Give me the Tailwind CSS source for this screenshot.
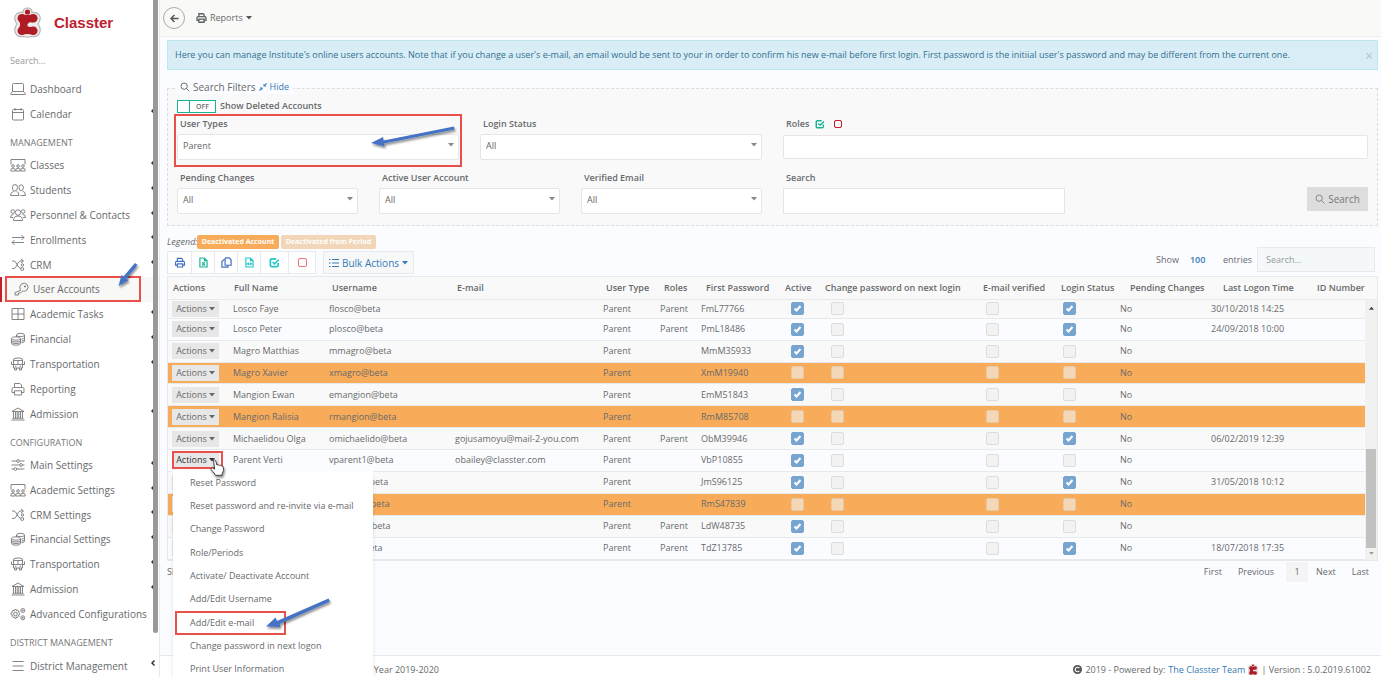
<!DOCTYPE html>
<html lang="en">

<head>
    <meta charset="UTF-8">
    <meta name="viewport" content="width=device-width, initial-scale=1.0">
    <title>Classter - User Accounts</title>
    <script src="https://cdn.jsdelivr.net/npm/@tailwindcss/browser@4"></script>
</head>

<body class="relative flex h-screen overflow-hidden bg-[#fbfcff] font-['Open_Sans',sans-serif] text-[9px] leading-[14px] text-[#676a6c]">

    <!-- Icon sprite -->
    <svg class="hidden" xmlns="http://www.w3.org/2000/svg">
        <symbol id="i-laptop" viewBox="0 0 16 14"><path d="M2.500 9.500v-7q0-1 1-1h9q1 0 1 1v7M2.500 9.500h11l2 2.500q0 .5-.8.5H1.300q-.8 0-.8-.5z"/></symbol>
        <symbol id="i-calendar" viewBox="0 0 16 14"><path d="M3.500 2.500h9q1 0 1 1v8.500q0 1-1 1h-9q-1 0-1-1V3.500q0-1 1-1zM2.500 5.500h11M5 1v2.500M11 1v2.500"/></symbol>
        <symbol id="i-class" viewBox="0 0 16 14"><path d="M1 6.500V1.500h14v5"/><circle cx="3" cy="8" r="1.300"/><circle cx="8" cy="8" r="1.300"/><circle cx="13" cy="8" r="1.300"/><path d="M.8 13v-1q0-1.800 2.200-1.800T5.200 12v1zM5.800 13v-1q0-1.800 2.200-1.800T10.200 12v1zM10.800 13v-1q0-1.800 2.200-1.800T15.200 12v1z"/></symbol>
        <symbol id="i-students" viewBox="0 0 16 14"><path d="M2.500 4.500q0-3 2.500-3t2.500 3T5 8 2.500 4.500zM9 4.500q0-2.700 2.200-2.700t2.300 2.700-2.300 3.100T9 4.500zM.5 12.500q0-3.500 3-4M6.500 8.500q2.500.5 2.500 4H.5M12.500 8q3 .8 3 4.500H10.500"/></symbol>
        <symbol id="i-people" viewBox="0 0 16 14"><circle cx="8" cy="4.500" r="2.700"/><circle cx="2.800" cy="3.500" r="1.800"/><circle cx="13.200" cy="3.500" r="1.800"/><path d="M3.500 12.500q0-4.500 4.500-4.500t4.500 4.500zM.5 9.500q0-3 3-3.200M15.500 9.500q0-3-3-3.200M.5 9.500h2.500M13 9.500h2.500"/></symbol>
        <symbol id="i-exchange" viewBox="0 0 16 14"><path d="M2 4.500h12M11.500 2l2.500 2.500L11.500 7M14 9.500H2M4.500 7L2 9.500 4.500 12"/></symbol>
        <symbol id="i-shuffle" viewBox="0 0 16 14"><path d="M2 3h2q1.500 0 3 3.500T11 10.500M2 10.500h2q1.500 0 3-3.500T10 3h3M11 1l2.500 2L11 5"/><circle cx="12.500" cy="7" r="1.200"/><circle cx="12.200" cy="11" r="1.500"/></symbol>
        <symbol id="i-key" viewBox="0 0 16 14"><path d="M7.500 8.500q-2-4 1-6.500 3-2 5.500.5t0 5.500q-2.500 2-4.500 1L7.500 11H5.500v2H2v-2.500zM11.500 4h1v1h-1z"/></symbol>
        <symbol id="i-grid" viewBox="0 0 16 14"><path d="M2 1.500h12v11H2zM8 1.500v11M2 7h12"/></symbol>
        <symbol id="i-coins" viewBox="0 0 16 14"><ellipse cx="10.500" cy="3" rx="4" ry="1.700"/><path d="M6.500 3v2M14.500 3v6q0 1.500-3 1.800M14.500 5.500q-.5 1.500-3 1.700M14.500 7.500q-.5 1.300-3 1.600"/><ellipse cx="6" cy="6.500" rx="4.500" ry="1.700"/><path d="M1.500 6.500v5q0 1.700 4.500 1.700t4.500-1.700v-5M1.500 8.500Q2 10 6 10t4.500-1.500M1.500 10Q2 11.600 6 11.600T10.500 10"/></symbol>
        <symbol id="i-bus" viewBox="0 0 16 14"><path d="M3.500 11V3q0-1.500 1.500-1.700 3-.6 6 0Q12.500 1.500 12.500 3v8zM3.500 3.500h9M3.500 7.500h9M8 3.500v4M1.500 4.500v3h2M14.500 4.500v3h-2M4.500 11v2h2v-2M9.500 11v2h2v-2M5 9.300h1.500M9.500 9.300H11"/></symbol>
        <symbol id="i-print" viewBox="0 0 16 14"><path d="M4.500 5.500v-4h5.500l1.500 1.500v2.500M4.500 10.500H2V7q0-1.500 1.500-1.500h9Q14 5.500 14 7v3.500h-2.500M4.500 8.800h7V13h-7z"/></symbol>
        <symbol id="i-bank" viewBox="0 0 16 14"><path d="M2 4.500L8 1l6 3.500zM3.500 5v6M5.500 5v6M7.200 5v6M8.800 5v6M10.500 5v6M12.500 5v6M2.500 11.300h11M1.500 13h13"/></symbol>
        <symbol id="i-sliders" viewBox="0 0 16 14"><path d="M1.500 3h5M9.500 3h5M1.500 7h8M12.500 7h2M1.500 11h2.500M7 11h7.500"/><circle cx="8" cy="3" r="1.400"/><circle cx="11" cy="7" r="1.400"/><circle cx="5.500" cy="11" r="1.400"/></symbol>
        <symbol id="i-gears" viewBox="0 0 16 14"><circle cx="5.500" cy="7" r="1.800"/><path d="M4.800 2.500h1.500l.4 1.300 1.200-.7 1 1-.6 1.200 1.300.6v1.800l-1.300.5.6 1.200-1 1-1.200-.6-.4 1.400H4.800l-.5-1.400-1.200.6-1-1 .6-1.200L1 7.700V6l1.500-.6L2 4.200l1-1 1.300.6z"/><circle cx="12.800" cy="3.500" r="2"/><circle cx="12.800" cy="3.500" r=".6"/><circle cx="12.800" cy="10.800" r="2"/><circle cx="12.800" cy="10.800" r=".6"/></symbol>
        <symbol id="i-lines" viewBox="0 0 16 14"><path d="M2.500 2.500h11M2.500 7h11M2.500 11.500h11"/></symbol>
        <symbol id="i-search" viewBox="0 0 12 12"><circle cx="5" cy="5" r="3.800"/><path d="M7.800 7.800L11.200 11.200"/></symbol>
        <symbol id="i-file" viewBox="0 0 10 12"><path d="M1 1h5l3 3v7H1zM6 1v3h3"/></symbol>
        <symbol id="i-copy" viewBox="0 0 12 12"><path d="M5 1h4l2 2v6H4.500V1.500zM4.500 3H3L1 5v6h6.500V9"/></symbol>
        <symbol id="i-check" viewBox="0 0 12 12"><path d="M10 6.500V9q0 1.500-1.500 1.500H3Q1.500 10.500 1.500 9V3.500Q1.500 2 3 2h5M4 5.500l2 2L10.800 3"/></symbol>
        <symbol id="i-caret" viewBox="0 0 6 4"><path d="M0 0h6L3 3.500z" stroke="none"/></symbol>
        <symbol id="i-logo" viewBox="0 0 28 32">
            <path d="M9.500 5.500Q9.500 1 14 1t4.500 4.500q5.500-.5 7.500 3t-1.500 8.500q3.500 4.500 1.500 9t-8.500 3.500q-3.500 1.500-7 0Q4 30.500 2 26t1.500-9Q0 12 2 8.500t7.500-3z" fill="#ececec" stroke="#b5b5b5" stroke-width="1.200"/>
            <g fill="#b01c26">
                <circle cx="14" cy="5" r="2.600"/>
                <circle cx="8.300" cy="11.200" r="4.300"/>
                <circle cx="19.800" cy="11.200" r="4.300"/>
                <circle cx="8.300" cy="23.800" r="4.300"/>
                <circle cx="19.800" cy="23.800" r="4.300"/>
                <path d="M8.500 7.200q5.500 1.600 11 0v8.300q-4.500-1.200-5.500 2t5.500 2.300v8q-5.500-1.600-11 0L5.500 21q2.200-3.500 0-7z"/>
            </g>
        </symbol>
    </svg>

    <!-- Sidebar -->
    <aside class="relative w-40 shrink-0 border-r border-[#e7eaec] bg-white text-[10px]">
        <a href="#" class="flex h-[46px] items-center gap-3 pl-[13px] font-['Liberation_Sans',sans-serif] text-[15px] font-bold text-[#c0202e]">
            <svg class="h-8 w-[29px]"><use href="#i-logo"/></svg>
            Classter
        </a>
        <input type="text" aria-label="Search menu" placeholder="Search..." class="block h-[29px] w-full px-[10px] text-[9px] outline-none placeholder:text-[#999]">
        <nav id="nav" class="pt-px"></nav>
        <div class="absolute top-0 right-[1px] h-[633px] w-[5px] rounded-b-sm bg-[#999]"></div>
    </aside>

    <main class="relative flex min-w-0 flex-1 flex-col">
        <header class="flex h-[37px] shrink-0 items-center gap-[11px] border-b border-[#eeeeec] bg-[#f9f9f8] px-[3px]">
            <button aria-label="Back" class="flex size-[22px] items-center justify-center rounded-full border border-[#aaa]">
                <svg class="size-[9px] fill-none stroke-[#555] stroke-[1.600]" viewBox="0 0 10 10"><path d="M9.500 5H1.500M5 1L1 5l4 4"/></svg>
            </button>
            <button class="flex items-center gap-[3px]">
                <svg class="h-[10px] w-[11px] fill-none stroke-[#5e6164] stroke-[1.800]" viewBox="1 0.500 14 13.500"><use href="#i-print" width="16" height="14"/></svg>
                Reports
                <svg class="h-1 w-[6px] fill-[#555]"><use href="#i-caret"/></svg>
            </button>
        </header>

        <div class="flex flex-col pt-[3px] pr-[3px] pl-[7px]">
            <div class="flex h-[30px] items-center justify-between border border-[#bce8f1] bg-[#d9edf7] pr-1 pl-[7px] text-[#31708f]">
                <p>Here you can manage Institute's online users accounts. Note that if you change a user's e-mail, an email would be sent to your in order to confirm his new e-mail before first login. First password is the initiial user's password and may be different from the current one.</p>
                <button aria-label="Close" class="pt-px text-[14px] text-[#a9c9d8]">×</button>
            </div>

            <!-- Search filters -->
            <section class="relative mt-[18px] border border-dashed border-[#ddd] bg-[#f9f9f9] px-[9px] pt-[10px] pb-[11px]">
                <h2 class="absolute -top-[9px] left-[8px] flex items-center gap-[3px] bg-[#fbfcff] px-1">
                    <svg class="size-[10px] fill-none stroke-[#555]"><use href="#i-search"/></svg>
                    <span class="text-[10px]">Search Filters</span>
                    <svg class="size-2 fill-[#337ab7]" viewBox="0 0 8 8"><path d="M8 .8L6.300 2.500 7.300 3.500H4.500V.7l1 1L7.200 0zM0 7.200L1.700 5.500.7 4.500h2.800v2.800l-1-1L.8 8z"/></svg>
                    <a href="#" class="text-[#337ab7]">Hide</a>
                </h2>
                <label class="flex h-[14px] items-center gap-1 font-semibold">
                    <input type="checkbox" class="absolute appearance-none">
                    <span class="flex h-[13px] w-[39px] border border-[#1ab394] bg-white text-[7px] leading-[11px] font-semibold"><span class="w-3 border-r border-[#1ab394]"></span><span class="flex-1 text-center">OFF</span></span>
                    Show Deleted Accounts
                </label>
                <div class="mt-[3px] grid grid-cols-12 gap-x-[21px] gap-y-[10px]">
                    <div class="col-span-3">
                        <label for="types" class="block h-[18px] pl-[3px] leading-[16px] font-semibold">User Types</label>
                        <div class="relative">
                            <select id="types" class="block h-[26px] w-full appearance-none rounded-xs border border-[#e5e6e7] bg-white px-[5px] pb-[2px] text-[#666]"><option>Parent</option></select>
                            <svg class="absolute top-[9px] right-[5px] h-1 w-[6px] fill-[#888]"><use href="#i-caret"/></svg>
                        </div>
                    </div>
                    <div class="col-span-3">
                        <label for="login" class="block h-[18px] pl-[3px] leading-[16px] font-semibold">Login Status</label>
                        <div class="relative">
                            <select id="login" class="block h-[26px] w-full appearance-none rounded-xs border border-[#e5e6e7] bg-white px-[5px] pb-[2px] text-[#666]"><option>All</option></select>
                            <svg class="absolute top-[9px] right-[5px] h-1 w-[6px] fill-[#888]"><use href="#i-caret"/></svg>
                        </div>
                    </div>
                    <div class="col-span-6">
                        <div class="flex h-[18px] items-center pb-[2px] pl-[3px]">
                            <label for="roles" class="font-semibold">Roles</label>
                            <button aria-label="Select all roles" class="ml-[6px]"><svg class="size-[10px] fill-none stroke-[#1ab394] stroke-[1.800]"><use href="#i-check"/></svg></button>
                            <button aria-label="Clear roles" class="ml-[9px] size-2 rounded-xs border border-[#c1202b] outline-1 -outline-offset-1 outline-[#c1202b]/50"></button>
                        </div>
                        <input id="roles" type="text" class="mt-px block h-6 w-full rounded-xs border border-[#e5e6e7] bg-white px-[5px]">
                    </div>
                    <div class="col-span-2">
                        <label for="pending" class="block h-[18px] pl-[3px] leading-[16px] font-semibold">Pending Changes</label>
                        <div class="relative">
                            <select id="pending" class="block h-[26px] w-full appearance-none rounded-xs border border-[#e5e6e7] bg-white px-[5px] pb-[2px] text-[#666]"><option>All</option></select>
                            <svg class="absolute top-[9px] right-[5px] h-1 w-[6px] fill-[#888]"><use href="#i-caret"/></svg>
                        </div>
                    </div>
                    <div class="col-span-2">
                        <label for="active" class="block h-[18px] pl-[3px] leading-[16px] font-semibold">Active User Account</label>
                        <div class="relative">
                            <select id="active" class="block h-[26px] w-full appearance-none rounded-xs border border-[#e5e6e7] bg-white px-[5px] pb-[2px] text-[#666]"><option>All</option></select>
                            <svg class="absolute top-[9px] right-[5px] h-1 w-[6px] fill-[#888]"><use href="#i-caret"/></svg>
                        </div>
                    </div>
                    <div class="col-span-2">
                        <label for="verified" class="block h-[18px] pl-[3px] leading-[16px] font-semibold">Verified Email</label>
                        <div class="relative">
                            <select id="verified" class="block h-[26px] w-full appearance-none rounded-xs border border-[#e5e6e7] bg-white px-[5px] pb-[2px] text-[#666]"><option>All</option></select>
                            <svg class="absolute top-[9px] right-[5px] h-1 w-[6px] fill-[#888]"><use href="#i-caret"/></svg>
                        </div>
                    </div>
                    <div class="col-span-3">
                        <label for="search" class="block h-[18px] pl-[3px] leading-[16px] font-semibold">Search</label>
                        <input id="search" type="text" class="block h-[26px] w-full border border-[#e5e6e7] bg-white px-[5px]">
                    </div>
                    <div class="col-span-3 flex items-end justify-end pb-[3px]">
                        <button class="flex h-6 w-[61px] items-center justify-center gap-[3px] bg-[#ddd] text-[10px] text-[#777]">
                            <svg class="size-[10px] fill-none stroke-[#777]"><use href="#i-search"/></svg>
                            Search
                        </button>
                    </div>
                </div>
            </section>

            <div class="mt-[9px] flex h-[14px] items-center gap-[2px]">
                <em class="w-7">Legend:</em>
                <span class="w-[82px] rounded-xs bg-[#f8ac59] text-center text-[7px] font-bold text-white">Deactivated Account</span>
                <span class="w-[95px] rounded-xs bg-[#f1d6b8] text-center text-[7px] font-bold text-white">Deactivated from Period</span>
            </div>

            <!-- Table toolbar -->
            <div class="mt-[2px] flex h-[25px] items-start">
                <div class="flex h-[23px] divide-x divide-[#e7eaec] border border-[#e7eaec] bg-white">
                    <button aria-label="Print" class="flex w-[24px] items-center justify-center"><svg class="h-[11px] w-3 fill-none stroke-[#3f6fc0] stroke-[1.500]"><use href="#i-print"/></svg></button>
                    <button aria-label="Export to Excel" class="flex w-[23px] items-center justify-center"><svg class="h-[11px] w-[9px] fill-none stroke-[#1ab394] stroke-[1.300]" viewBox="0 0 10 12"><use href="#i-file"/><path d="M3.500 5.500l3 4M6.500 5.500l-3 4"/></svg></button>
                    <button aria-label="Copy" class="flex w-[23px] items-center justify-center"><svg class="size-[11px] fill-none stroke-[#3f6fc0] stroke-[1.300]"><use href="#i-copy"/></svg></button>
                    <button aria-label="Export to CSV" class="flex w-[23px] items-center justify-center"><svg class="h-[11px] w-[9px] fill-none stroke-[#23c6c8] stroke-[1.300]" viewBox="0 0 10 12"><use href="#i-file"/><path d="M2.500 6.500v2M4 6v3M6 6v3M7.500 6.500v2"/></svg></button>
                    <button aria-label="Select all" class="flex w-7 items-center justify-center"><svg class="size-[11px] fill-none stroke-[#23c6c8] stroke-[1.800]"><use href="#i-check"/></svg></button>
                    <button aria-label="Deselect all" class="flex w-[26px] items-center justify-center"><span class="size-[9px] rounded-xs border border-[#f0808c] outline-1 -outline-offset-1 outline-[#ed5565]/30"></span></button>
                </div>
                <button class="ml-[7px] flex h-[23px] w-[91px] items-center justify-center gap-[3px] border border-[#e7eaec] bg-[#f8f8f8] text-[10px] text-[#337ab7]">
                    <svg class="h-2 w-[10px] fill-none stroke-[#337ab7]" viewBox="0 0 10 8"><path d="M0 .5h1.500M3 .5h7M0 4h1.500M3 4h7M0 7.500h1.500M3 7.500h7"/></svg>
                    Bulk Actions
                    <svg class="h-1 w-[6px] fill-[#337ab7]"><use href="#i-caret"/></svg>
                </button>
                <div class="-mt-1 ml-auto flex items-center pr-[3px]">
                    <label for="entries">Show</label>
                    <select id="entries" class="mx-[11px] w-[22px] appearance-none font-semibold text-[#337ab7]"><option>100</option></select>
                    <span>entries</span>
                    <input type="search" aria-label="Search table" placeholder="Search..." class="ml-[5px] h-[25px] w-[118px] border border-[#e7eaec] bg-[#f4f8fb] px-2 outline-none placeholder:text-[#999]">
                </div>
            </div>

            <div class="border border-[#e7eaec]">
                <table class="w-full table-fixed bg-[#f9f9f9] text-left">
                    <thead>
                        <tr class="h-[22px] border-b border-[#e7eaec] whitespace-nowrap [&>th]:px-[5px] [&>th]:py-0 [&>th]:font-semibold">
                            <th class="w-[61px]">Actions</th>
                            <th class="w-[98px]">Full Name</th>
                            <th class="w-[125px]">Username</th>
                            <th class="w-[149px]">E-mail</th>
                            <th class="w-[58px]">User Type</th>
                            <th class="w-[42px]">Roles</th>
                            <th class="w-[79px]">First Password</th>
                            <th class="w-[40px]">Active</th>
                            <th class="w-[158px]">Change password on next login</th>
                            <th class="w-[78px]">E-mail verified</th>
                            <th class="w-[69px]">Login Status</th>
                            <th class="w-[93px]">Pending Changes</th>
                            <th class="w-[94px]">Last Logon Time</th>
                            <th>ID Number</th>
                        </tr>
                    </thead>
                </table>
                <div class="flex">
                    <table class="h-[260px] min-w-0 flex-1 table-fixed text-left">
                        <colgroup>
                            <col class="w-[60px]">
                            <col class="w-[96px]">
                            <col class="w-[126px]">
                            <col class="w-[148px]">
                            <col class="w-[57px]">
                            <col class="w-[41px]">
                            <col class="w-[90px]">
                            <col class="w-[40px]">
                            <col class="w-[155px]">
                            <col class="w-[77px]">
                            <col class="w-[57px]">
                            <col class="w-[91px]">
                            <col class="w-[100px]">
                            <col>
                        </colgroup>
                        <tbody id="rows"></tbody>
                    </table>
                    <div class="flex w-3 flex-col items-center justify-between bg-[#f1f1f1] py-[6px]">
                        <svg class="h-1 w-[5px] rotate-180 fill-[#444]"><use href="#i-caret"/></svg>
                        <div class="mt-auto mb-1 h-[99px] w-[10px] bg-[#c1c1c1]"></div>
                        <svg class="-mb-px h-[3px] w-[5px] fill-[#999]"><use href="#i-caret"/></svg>
                    </div>
                </div>
            </div>

            <div class="flex items-center justify-between">
                <span>Showing</span>
                <nav class="flex h-[22px] items-center gap-[8px] pr-[9px] leading-[20px]" aria-label="Pages">
                    <a href="#" class="px-1">First</a>
                    <a href="#" class="px-1">Previous</a>
                    <a href="#" class="w-[22px] bg-[#f4f4f4] text-center">1</a>
                    <a href="#">Next</a>
                    <a href="#" class="pl-2">Last</a>
                </nav>
            </div>
        </div>

        <footer class="mt-auto flex h-[22px] shrink-0 items-center justify-between border-t border-[#e7eaec] bg-white pt-[6px] pr-[10px] pl-[171px]">
            <span>Academic Year 2019-2020</span>
            <span class="flex items-center gap-[3px]">
                <svg class="size-[9px]" viewBox="0 0 10 10"><circle cx="5" cy="5" r="5" fill="#555"/><path d="M7 3.500a2.500 2.500 0 1 0 0 3" fill="none" stroke="#fff" stroke-width="1.300"/></svg>
                2019 - Powered by:
                <a href="#" class="text-[#337ab7]">The Classter Team</a>
                <svg class="h-[11px] w-[10px]" viewBox="2 1 24 28"><use href="#i-logo" width="28" height="32"/></svg>
                | Version : 5.0.2019.61002
            </span>
        </footer>

        <!-- Row actions menu -->
        <ul id="menu" class="absolute top-[471px] left-[13px] grid h-[210px] w-[200px] auto-rows-fr items-center bg-white pl-[17px] shadow-md"></ul>
    </main>

    <!-- Tutorial call-outs -->
    <svg class="pointer-events-none absolute inset-0 h-full w-full">
        <defs>
            <filter id="shade" x="-20%" y="-20%" width="150%" height="170%"><feDropShadow dx="1" dy="2" stdDeviation="1.200" flood-opacity=".45"/></filter>
        </defs>
        <g fill="none" stroke="#e9504a" stroke-width="2">
            <rect x="175" y="115" width="286" height="51"/>
            <rect x="6" y="277" width="134" height="24"/>
            <rect x="173" y="452" width="49" height="16"/>
            <rect x="176" y="612" width="109" height="22"/>
        </g>
        <g fill="#4472c4" filter="url(#shade)">
            <path d="M454 126.500l.6 3L384 143.500l.8 3L371 143l12-6 .6 3.500z"/>
            <path d="M135 263l2.500 2L126.500 278.500l2 1.800L118.500 286l3-11 2 1.600z"/>
            <path d="M328.500 598.500l1.500 3L279.500 624l1.200 3L266 626.500l9.500-9 1.500 3.500z"/>
        </g>
        <path d="M213.500 460.500q1.200-1.200 2.200.3l1.200 4.200q1.200-1 2.300.4 1.300-.8 2.200.6 1.500-.4 1.900 1l.2 3.500-1.300 3v1.800h-6.700q-1.500-3.500-4.700-5.800 0-2 1.600-1.600l2.300 1.200z" fill="#fff" stroke="#333" stroke-width=".9" filter="url(#shade)"/>
    </svg>

    <script>
        // [icon, label, has children]
        const sections = [
            ['', [['laptop', 'Dashboard', 0], ['calendar', 'Calendar', 1]]],
            ['MANAGEMENT', [['class', 'Classes', 1], ['students', 'Students', 1], ['people', 'Personnel & Contacts', 1], ['exchange', 'Enrollments', 1], ['shuffle', 'CRM', 1], ['key', 'User Accounts', 0], ['grid', 'Academic Tasks', 1], ['coins', 'Financial', 1], ['bus', 'Transportation', 1], ['print', 'Reporting', 0], ['bank', 'Admission', 1]]],
            ['CONFIGURATION', [['sliders', 'Main Settings', 1], ['class', 'Academic Settings', 1], ['shuffle', 'CRM Settings', 1], ['coins', 'Financial Settings', 1], ['bus', 'Transportation', 1], ['bank', 'Admission', 1], ['gears', 'Advanced Configurations', 0]]],
            ['DISTRICT MANAGEMENT', [['lines', 'District Management', 1]]],
        ];
        const listHeights = ['h-[50px]', 'h-[273px]', 'h-[173px]', 'h-[25px]'];

        // name, username, e-mail, role, password, active, login, last logon, deactivated
        const users = [
            ['Losco Faye', 'flosco@beta', '', 'Parent', 'FmL77766', 1, 1, '30/10/2018 14:25', 0],
            ['Losco Peter', 'plosco@beta', '', 'Parent', 'PmL18486', 1, 1, '24/09/2018 10:00', 0],
            ['Magro Matthias', 'mmagro@beta', '', '', 'MmM35933', 1, 0, '', 0],
            ['Magro Xavier', 'xmagro@beta', '', '', 'XmM19940', 0, 0, '', 1],
            ['Mangion Ewan', 'emangion@beta', '', '', 'EmM51843', 1, 0, '', 0],
            ['Mangion Ralisia', 'rmangion@beta', '', '', 'RmM85708', 0, 0, '', 1],
            ['Michaelidou Olga', 'omichaelido@beta', 'gojusamoyu@mail-2-you.com', 'Parent', 'ObM39946', 1, 1, '06/02/2019 12:39', 0],
            ['Parent Verti', 'vparent1@beta', 'obailey@classter.com', '', 'VbP10855', 1, 0, '', 0],
            ['', 'jsimons@beta', '', '', 'JmS96125', 1, 1, '31/05/2018 10:12', 0],
            ['', 'rsimons@beta', '', '', 'RmS47839', 0, 0, '', 1],
            ['', 'lwhitesa@beta', '', 'Parent', 'LdW48735', 1, 0, '', 0],
            ['', 'tzahra@beta', '', 'Parent', 'TdZ13785', 1, 1, '18/07/2018 17:35', 0],
        ];

        const actions = ['Reset Password', 'Reset password and re-invite via e-mail', 'Change Password', 'Role/Periods', 'Activate/ Deactivate Account', 'Add/Edit Username', 'Add/Edit e-mail', 'Change password in next logon', 'Print User Information'];

        document.getElementById('nav').innerHTML = sections.map(([title, items], i) => `
            ${title ? `<h3 class="flex h-[27px] items-center px-[10px] pt-[6px] text-[9px] whitespace-nowrap text-[#777]">${title}</h3>` : ''}
            <ul class="grid auto-rows-fr ${listHeights[i]}">
                ${items.map(([icon, label, sub]) => `
                <li class="grid"><a href="#" class="relative flex items-center gap-1 whitespace-nowrap ${label === 'User Accounts' ? 'border-l-2 border-[#c1202b] bg-[#f8f8f7] pl-[11px]' : 'pl-[10px]'}">
                    <svg class="h-[14px] w-4 fill-none stroke-[#777] stroke-[0.900]"><use href="#i-${icon}"/></svg>
                    ${label}
                    ${sub ? '<svg class="absolute top-[7px] right-1 h-[6px] w-1 fill-none stroke-[#333] stroke-[1.500]" viewBox="0 0 4 6"><path d="M3.500.5L1 3l2.500 2.500"/></svg>' : ''}
                </a></li>`).join('')}
            </ul>`).join('');

        function checkbox(label, on, off) {
            const look = on ? 'border-[#78a5d0] bg-[#78a5d0]' : off ? 'border-[#e6c9a5] bg-[#f3d7b7]' : 'border-[#ddd] bg-[#f2f2f2]';
            return `<span class="relative block size-[13px]">
                <input type="checkbox" aria-label="${label}" disabled ${on ? 'checked' : ''} class="block size-[13px] appearance-none rounded-xs border ${look}">
                ${on ? '<svg class="absolute top-[3px] left-[3px] size-[7px] fill-none stroke-white stroke-2" viewBox="0 0 7 7"><path d="M.5 3.500l2 2L6.500 1"/></svg>' : ''}
            </span>`;
        }

        document.getElementById('rows').innerHTML = users.map(([name, user, mail, role, pass, active, login, time, off], i) => `
            <tr class="border-b border-[#e7eaec] whitespace-nowrap [&>td]:px-[5px] [&>td]:py-0 ${i === 0 ? 'h-[18px]' : 'h-[21px]'} ${off ? 'bg-[#f8ac59]' : i % 2 ? 'bg-[#fbfcff]' : 'bg-[#f9f9f9]'}">
                <td><button class="-ml-px flex h-4 w-[47px] items-center justify-center gap-[2px] bg-[#e7e7e7] ${i === 7 ? 'text-[#333]' : ''}">Actions<svg class="h-1 w-[6px] fill-current"><use href="#i-caret"/></svg></button></td>
                <td>${name}</td>
                <td>${user}</td>
                <td>${mail}</td>
                <td>Parent</td>
                <td>${role}</td>
                <td>${pass}</td>
                <td>${checkbox('Active', active, off)}</td>
                <td>${checkbox('Change password on next login', 0, off)}</td>
                <td>${checkbox('E-mail verified', 0, off)}</td>
                <td>${checkbox('Login status', login, off)}</td>
                <td>No</td>
                <td>${time}</td>
                <td></td>
            </tr>`).join('');

        document.getElementById('menu').innerHTML = actions.map(a => `<li><a href="#" class="block whitespace-nowrap">${a}</a></li>`).join('');
    </script>

</body>

</html>
